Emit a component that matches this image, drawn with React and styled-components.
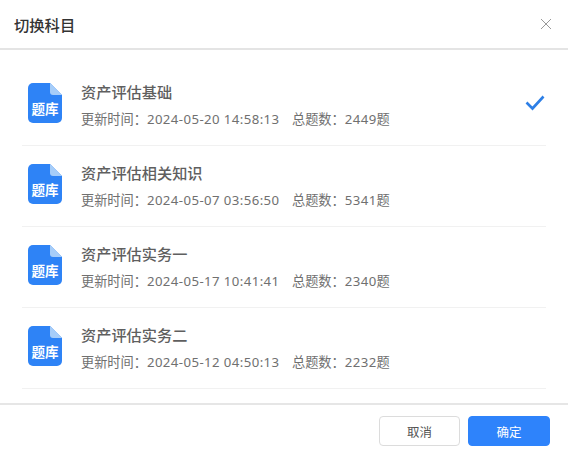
import React from 'react'
import styled, { createGlobalStyle } from 'styled-components'

const GlobalStyle = createGlobalStyle`
  html, body {
    margin: 0;
    padding: 0;
    background: #fff;
    font-family: "Liberation Sans", "Noto Sans CJK SC", sans-serif;
  }
`

const Dialog = styled.div`
  width: 568px;
  height: 455px;
  display: flex;
  flex-direction: column;
  background: #fff;
  overflow: hidden;
`

const Header = styled.div`
  height: 50px;
  box-sizing: border-box;
  display: flex;
  align-items: center;
  justify-content: space-between;
  padding: 0 16px 0 14px;
  border-bottom: 2px solid #e4e4e4;
  flex-shrink: 0;
`

const Title = styled.div`
  font-size: 15.3px;
  font-weight: 500;
  color: #333;
`

const Close = styled.button`
  border: 0;
  padding: 0;
  background: none;
  width: 12px;
  height: 12px;
  display: flex;
  color: #999;
`

const List = styled.div`
  flex: 1;
  padding: 15px 22px 0;
`

const Row = styled.div`
  height: 81px;
  box-sizing: border-box;
  border-bottom: 1px solid #f1f1f1;
  display: flex;
  align-items: center;
  padding: 0 1px 0 6px;
`

const FileIcon = styled.div`
  position: relative;
  width: 34px;
  height: 40px;
  flex-shrink: 0;
  margin: 0 19px 4px 0;
`

const FileShape = styled.svg`
  display: block;
  width: 34px;
  height: 40px;
`

const FileLabel = styled.span`
  position: absolute;
  left: 0;
  right: 0;
  bottom: 5px;
  text-align: center;
  font-size: 13.5px;
  line-height: 16px;
  font-weight: 700;
  color: #fff;
  white-space: nowrap;
`

const Info = styled.div`
  flex: 1;
  display: flex;
  flex-direction: column;
  gap: 7px;
  margin-top: 1px;
`

const Name = styled.div`
  font-size: 15.2px;
  line-height: 20px;
  font-weight: 500;
  color: #5f5f5f;
`

const Meta = styled.div`
  display: flex;
  font-family: "Noto Sans", "Noto Sans CJK SC", sans-serif;
  font-size: 13.2px;
  line-height: 18px;
  color: #707070;
`

const UpdatedAt = styled.span`
  width: 211px;
`

const Digits = styled.span`
  letter-spacing: 0.42px;
`

const Check = styled.svg`
  width: 20px;
  height: 16px;
  margin-bottom: 4px;
  color: #2d7fe6;
`

const Footer = styled.div`
  height: 52px;
  box-sizing: border-box;
  display: flex;
  justify-content: flex-end;
  align-items: flex-start;
  gap: 8px;
  padding: 11px 18px 0 0;
  border-top: 2px solid #e6e6e6;
  flex-shrink: 0;
`

const Button = styled.button`
  width: ${({ $primary }) => ($primary ? '82px' : '81px')};
  height: 30px;
  box-sizing: border-box;
  border: 1px solid ${({ $primary }) => ($primary ? '#2e83fb' : '#dcdcdc')};
  border-radius: 4px;
  background: ${({ $primary }) => ($primary ? '#2e83fb' : '#fff')};
  color: ${({ $primary }) => ($primary ? '#fff' : '#555')};
  font-family: inherit;
  font-size: 12.5px;
  padding: 0;
`

const subjects = [
  { name: '资产评估基础', time: '2024-05-20 14:58:13', total: 2449, active: true },
  { name: '资产评估相关知识', time: '2024-05-07 03:56:50', total: 5341 },
  { name: '资产评估实务一', time: '2024-05-17 10:41:41', total: 2340 },
  { name: '资产评估实务二', time: '2024-05-12 04:50:13', total: 2232 },
]

const BankIcon = () => (
  <FileIcon>
    <FileShape viewBox="0 0 34 40">
      <path d="M5 0H22L34 12V35a5 5 0 0 1-5 5H5a5 5 0 0 1-5-5V5a5 5 0 0 1 5-5Z" fill="#2e83f6" />
      <path d="M22 0L34 12H25a3 3 0 0 1-3-3Z" fill="#a6cdf9" />
    </FileShape>
    <FileLabel>题库</FileLabel>
  </FileIcon>
)

const App = () => (
  <>
    <GlobalStyle />
    <Dialog>
      <Header>
        <Title>切换科目</Title>
        <Close aria-label="关闭">
          <svg viewBox="0 0 12 12" width="12" height="12" fill="none" stroke="currentColor" strokeWidth="1">
            <path d="M1 1L11 11M11 1L1 11" />
          </svg>
        </Close>
      </Header>
      <List>
        {subjects.map((s) => (
          <Row key={s.name}>
            <BankIcon />
            <Info>
              <Name>{s.name}</Name>
              <Meta>
                <UpdatedAt>更新时间：<Digits>{s.time}</Digits></UpdatedAt>
                <span>总题数：<Digits>{s.total}</Digits>题</span>
              </Meta>
            </Info>
            {s.active && (
              <Check viewBox="0 0 20 16" fill="none" stroke="currentColor" strokeWidth="2.6">
                <path d="M1.5 7.5L7.5 13.5L18.5 1.5" />
              </Check>
            )}
          </Row>
        ))}
      </List>
      <Footer>
        <Button>取消</Button>
        <Button $primary>确定</Button>
      </Footer>
    </Dialog>
  </>
)

export default App
